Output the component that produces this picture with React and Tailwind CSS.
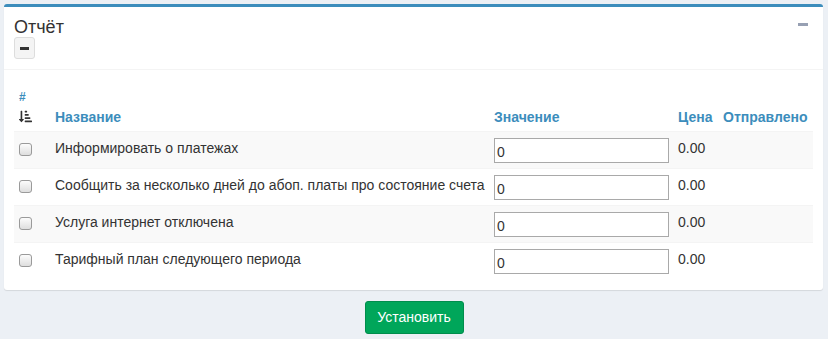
import React from 'react';
import { FaSortAmountDownAlt } from 'react-icons/fa';

const rows = [
    'Информировать о платежах',
    'Сообщить за несколько дней до абоп. платы про состояние счета',
    'Услуга интернет отключена',
    'Тарифный план следующего периода',
];

const App = () => {
    return (
        <div className="min-h-[339px] bg-[#ecf0f5] pt-[4px] px-[4px] pb-[6px] font-['Liberation_Sans',Arial,sans-serif] text-[#333]">
            <div className="bg-white border-t-[3px] border-[#3c8dbc] rounded-[3px] shadow-[0_1px_1px_rgba(0,0,0,0.1)] mr-[1px]">
                {/* header */}
                <div className="flex justify-between px-[10px] pt-[10px] pb-[10px] border-b border-[#f4f4f4]">
                    <div>
                        <h3 className="text-[18px] leading-[20px] text-[#333]">Отчёт</h3>
                        <button className="w-[21px] h-[22px] flex items-center justify-center bg-[#f4f4f4] border border-[#ddd] rounded-[3px]">
                            <span className="block w-[9px] h-[3px] bg-[#333]" />
                        </button>
                    </div>
                    <div className="pt-[6px] pr-[5px]">
                        <span className="block w-[10px] h-[3px] bg-[#97a0b3]" />
                    </div>
                </div>

                {/* body */}
                <div className="px-[10px] pt-[11px] pb-[11px]">
                    <table className="w-[799px] table-fixed border-collapse text-[14px]">
                        <colgroup>
                            <col className="w-[33px]" />
                            <col className="w-[446px]" />
                            <col className="w-[177px]" />
                            <col className="w-[45px]" />
                            <col className="w-[98px]" />
                        </colgroup>
                        <thead>
                            <tr className="text-[#3c8dbc] font-bold align-bottom">
                                <th className="text-left px-[5px] pt-[8px] pb-[8px]">
                                    <div className="text-[12px] leading-[16px]">#</div>
                                    <FaSortAmountDownAlt className="block text-[#333] mt-[5px]" size={13} />
                                </th>
                                <th className="text-left px-[8px] pt-[8px] pb-[4px] leading-[20px]">Название</th>
                                <th className="text-left px-[1px] pt-[8px] pb-[4px] leading-[20px]">Значение</th>
                                <th className="text-left px-[8px] pt-[8px] pb-[4px] leading-[20px]">Цена</th>
                                <th className="text-left pl-[8px] pt-[8px] pb-[4px] leading-[20px] whitespace-nowrap">Отправлено</th>
                            </tr>
                        </thead>
                        <tbody>
                            {rows.map((name, i) => (
                                <tr key={i} className={`border-t border-[#f4f4f4] align-top ${i % 2 === 0 ? 'bg-[#f9f9f9]' : 'bg-white'}`}>
                                    <td className="px-[5px] pt-[11px]">
                                        <div className="w-[13px] h-[13px] rounded-[3px] border border-[#9a9a9a] bg-gradient-to-b from-[#fcfcfc] to-[#dedede]" />
                                    </td>
                                    <td className="px-[8px] pt-[6px] leading-[20px] whitespace-nowrap">{name}</td>
                                    <td className="px-[1px] pt-[6px] pb-[5px]">
                                        <input
                                            type="text"
                                            defaultValue="0"
                                            className="block w-[175px] h-[25px] bg-white border border-[#a9a9a9] px-[2px] pt-[3px] text-[14px] text-[#333] outline-none"
                                        />
                                    </td>
                                    <td className="px-[8px] pt-[6px] leading-[20px] text-[#333]">0.00</td>
                                    <td className="pl-[8px] pt-[6px]"></td>
                                </tr>
                            ))}
                        </tbody>
                    </table>
                </div>
            </div>

            <div className="flex justify-center mt-[11px]">
                <button className="w-[99px] h-[33px] bg-[#00a65a] border border-[#008d4c] rounded-[3px] text-white text-[14px]">
                    Установить
                </button>
            </div>
        </div>
    );
};

export default App;
